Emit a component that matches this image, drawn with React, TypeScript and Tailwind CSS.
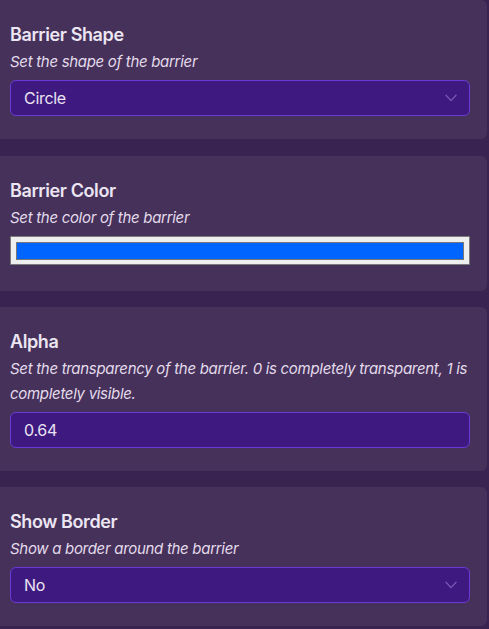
import React from "react";

function Chevron() {
  return (
    <svg width="12" height="8" viewBox="0 0 12 8" fill="none" className="shrink-0">
      <path d="M1 1.2 L6 6.6 L11 1.2" stroke="#7a58b4" strokeWidth="1.3" strokeLinecap="round" strokeLinejoin="round" />
    </svg>
  );
}

function Card({ title, desc, children, first }: { title: string; desc: string; children: React.ReactNode; first?: boolean }) {
  return (
    <div className={`${first ? "mb-[1px]" : ""} w-[487px] rounded-r-[6px] bg-[#45315a] pl-[10px] pr-[17px] pt-[21px] pb-[23px]`}>
      <div className="text-[18px] leading-[28px] font-semibold tracking-[-0.4px] text-[#ece5f2]">{title}</div>
      <div className="text-[15px] leading-[25px] italic tracking-[-0.3px] text-[#e4dbeb]">{desc}</div>
      <div className="mt-[6px]">{children}</div>
    </div>
  );
}

function Select({ value }: { value: string }) {
  return (
    <div className="flex h-[36px] w-[460px] items-center justify-between rounded-[6px] border border-[#6a3ad6] bg-[#3e1a80] pl-[13px] pr-[12px]">
      <span className="text-[16px] tracking-[-0.3px] text-[#ebe3f3]">{value}</span>
      <Chevron />
    </div>
  );
}

export default function App() {
  return (
    <div
      className="flex min-h-screen flex-col gap-[16px] overflow-hidden bg-[#392350]"
      style={{ fontFamily: "Inter, 'Noto Sans', sans-serif" }}
    >
      <Card first title="Barrier Shape" desc="Set the shape of the barrier">
        <Select value="Circle" />
      </Card>
      <Card title="Barrier Color" desc="Set the color of the barrier">
        <div className="mb-[3px] flex h-[29px] w-[460px] items-center rounded-[1px] border border-[#7c7c7c] bg-[#efefef] px-[5px]">
          <div className="h-[18px] w-full border border-[#777777] bg-[#0064ff]" />
        </div>
      </Card>
      <Card
        title="Alpha"
        desc="Set the transparency of the barrier. 0 is completely transparent, 1 is completely visible."
      >
        <div className="flex h-[36px] w-[460px] items-center rounded-[6px] border border-[#6a3ad6] bg-[#3e1a80] pl-[13px]">
          <span className="text-[16px] tracking-[-0.3px] text-[#ebe3f3]">0.64</span>
        </div>
      </Card>
      <Card title="Show Border" desc="Show a border around the barrier">
        <Select value="No" />
      </Card>
    </div>
  );
}
